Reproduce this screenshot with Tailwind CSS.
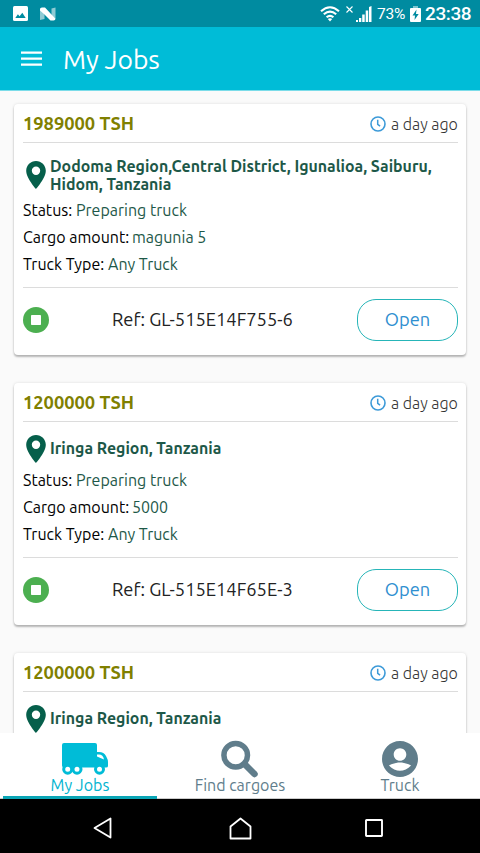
<!DOCTYPE html>
<html lang="en">
<head>
<meta charset="utf-8">
<title>My Jobs</title>
<script src="https://cdn.jsdelivr.net/npm/@tailwindcss/browser@4"></script>
</head>
<body class="h-[853px] w-[480px] overflow-hidden bg-[#fafafa] font-['Ubuntu','Noto_Sans',sans-serif] whitespace-nowrap">
<svg class="hidden">
  <symbol id="pin" viewBox="5 2 14 20"><path fill-rule="evenodd" d="M12 2C8.13 2 5 5.13 5 9c0 5.25 7 13 7 13s7-7.75 7-13c0-3.87-3.13-7-7-7zm0 10a3 3 0 1 1 0-6 3 3 0 0 1 0 6z"/></symbol>
  <symbol id="clock" viewBox="0 0 16 16"><circle cx="8" cy="8" r="7" fill="none" stroke="currentColor" stroke-width="1.6"/><path d="M7.700 3.700v4.600l2.400 1.900" fill="none" stroke="currentColor" stroke-width="1.500"/></symbol>
  <symbol id="stop" viewBox="0 0 26 26"><circle cx="13" cy="13" r="13" fill="#4caf50"/><rect x="8" y="8" width="10" height="10" rx=".8" fill="#fff"/></symbol>
</svg>
<div class="flex h-full flex-col">
  <div class="flex h-[27px] shrink-0 items-center bg-[#008ba0] pl-[13px] pr-[9px] text-white">
    <svg class="h-[15px] w-[15px]" viewBox="0 0 15 15"><rect width="15" height="15" rx="1.5" fill="#fff"/><path d="M2.300 12l2.600-3.800 1.700 2L9.300 6.800 12.700 12z" fill="#008ba0"/></svg>
    <svg class="ml-[11px] h-[14px] w-[18px]" viewBox="0 0 18 14"><path d="M1 2.500L5.500 5v7L1 13zM12.500 1.500l4-1v11l-4-3z" fill="#8fcbd4"/><path d="M1 2Q1 .5 3 .5h3l6 6.500 4.500 4.500q0 2-2 2h-3L5.500 7.500 1 3.500z" fill="#fff"/></svg>
    <div class="ml-auto flex items-center">
      <svg class="h-[16px] w-[20px]" viewBox="0 0 20 16" fill="none" stroke="#fff" stroke-width="2.100"><path d="M1 5.200Q10-2.700 19 5.200M3.800 8.300Q10 2.800 16.200 8.300M6.600 11.300Q10 8.300 13.400 11.300"/><path d="M7.800 13L10 15.500 12.200 13Q10 11.500 7.800 13z" fill="#fff" stroke="none"/></svg>
      <svg class="mb-[8px] ml-[6px] h-[7px] w-[7px]" viewBox="0 0 7 7" stroke="#fff" stroke-width="1.100"><path d="M.5.500l6 6M6.500.500l-6 6"/></svg>
      <svg class="ml-[3px] h-[16px] w-[16px]" viewBox="0 0 16 16" fill="#fff"><path d="M0 14h2v2H0zM3 12h2.300v4H3zM6.200 8.500h2.500V16H6.200zM9.700 4.500h2.500V16H9.700zM13 1l2.500-1v16H13z"/></svg>
      <span class="ml-[5px] mt-[2px] w-[29px] font-[Roboto] text-[15.500px] tracking-[-0.2px]">73%</span>
      <svg class="ml-[4px] h-[16px] w-[11px]" viewBox="0 0 11 16"><path d="M3 0h5v2H3z" fill="#7fc5cf"/><rect y="2" width="11" height="14" rx="1" fill="#fff"/><path d="M6.500 3.500L2.500 9.500H5L4.500 14 8.700 8H6z" fill="#008ba0"/></svg>
      <span class="ml-[4px] mt-[2px] w-[46px] font-[Roboto] text-[19px] font-medium tracking-[-0.4px]">23:38</span>
    </div>
  </div>
  <header class="flex h-[64px] shrink-0 items-center border-b border-[#7bdce9] bg-[#00bcd7] pl-[21px] text-white">
    <svg class="h-[15px] w-[21px]" viewBox="0 0 21 15" fill="#fff"><path d="M0 .5h21v2.200H0zM0 6.500h21v2.200H0zM0 12.500h21v2.200H0z"/></svg>
    <h1 class="ml-[21px] mt-[1px] text-[26.500px] leading-[32px] tracking-[-0.1px]">My Jobs</h1>
  </header>
  <main class="flex min-h-0 flex-1 flex-col gap-[28px] overflow-hidden px-[14px] pt-[13px] text-[16px] text-[#1d5848]">
    <article class="flex h-[251px] shrink-0 flex-col rounded-[4px] bg-white pl-[9px] pr-[8px] shadow-[0_2px_2px_rgba(0,0,0,0.25),0_0_3px_rgba(0,0,0,0.12)]">
      <div class="flex h-[39px] shrink-0 items-center border-b border-[#dcdcdc] pt-[1px]">
        <b class="text-[18.300px] text-[#808000]">1989000 TSH</b>
        <svg class="ml-auto h-4 w-4 text-[#3c9ad8]"><use href="#clock"/></svg>
        <span class="ml-[5px] w-[67px] font-light text-[#333]">a day ago</span>
      </div>
      <div class="flex h-[54px] shrink-0 items-center pt-[10px] pl-[3px]">
        <svg class="h-[28px] w-[20px] fill-[#065f4b]"><use href="#pin"/></svg>
        <b class="ml-[4px] text-[15.900px] leading-[18px]">Dodoma Region,Central District, Igunalioa, Saiburu,<br>Hidom, Tanzania</b>
      </div>
      <p class="h-[27px] leading-[27px]"><span class="inline-block w-[53px] text-black">Status:</span><span>Preparing truck</span></p>
      <p class="h-[27px] leading-[27px]"><span class="inline-block w-[109px] text-black">Cargo amount:</span><span>magunia 5</span></p>
      <p class="h-[27px] leading-[27px]"><span class="inline-block w-[85px] text-black">Truck Type:</span><span>Any Truck</span></p>
      <div class="mt-[9px] flex flex-1 items-center border-t border-[#dcdcdc] pb-[4px]">
        <svg class="h-[26px] w-[26px]"><use href="#stop"/></svg>
        <span class="ml-[63px] text-[18.300px] text-[#222]">Ref: GL-515E14F755-6</span>
        <button class="ml-auto h-[42px] w-[101px] rounded-[19px] border border-[#26b5b8] text-[18.300px] text-[#2f8fd0]">Open</button>
      </div>
    </article>
    <article class="flex h-[242px] shrink-0 flex-col rounded-[4px] bg-white pl-[9px] pr-[8px] shadow-[0_2px_2px_rgba(0,0,0,0.25),0_0_3px_rgba(0,0,0,0.12)]">
      <div class="flex h-[39px] shrink-0 items-center border-b border-[#dcdcdc] pt-[1px]">
        <b class="text-[18.300px] text-[#808000]">1200000 TSH</b>
        <svg class="ml-auto h-4 w-4 text-[#3c9ad8]"><use href="#clock"/></svg>
        <span class="ml-[5px] w-[67px] font-light text-[#333]">a day ago</span>
      </div>
      <div class="flex h-[45px] shrink-0 items-center pt-[9px] pl-[3px]">
        <svg class="h-[28px] w-[20px] fill-[#065f4b]"><use href="#pin"/></svg>
        <b class="mb-[2px] ml-[4px] text-[15.900px] leading-[18px]">Iringa Region, Tanzania</b>
      </div>
      <p class="h-[27px] leading-[27px]"><span class="inline-block w-[53px] text-black">Status:</span><span>Preparing truck</span></p>
      <p class="h-[27px] leading-[27px]"><span class="inline-block w-[109px] text-black">Cargo amount:</span><span>5000</span></p>
      <p class="h-[27px] leading-[27px]"><span class="inline-block w-[85px] text-black">Truck Type:</span><span>Any Truck</span></p>
      <div class="mt-[9px] flex flex-1 items-center border-t border-[#dcdcdc] pb-[4px]">
        <svg class="h-[26px] w-[26px]"><use href="#stop"/></svg>
        <span class="ml-[63px] text-[18.300px] text-[#222]">Ref: GL-515E14F65E-3</span>
        <button class="ml-auto h-[42px] w-[101px] rounded-[19px] border border-[#26b5b8] text-[18.300px] text-[#2f8fd0]">Open</button>
      </div>
    </article>
    <article class="flex h-[242px] shrink-0 flex-col rounded-[4px] bg-white pl-[9px] pr-[8px] shadow-[0_2px_2px_rgba(0,0,0,0.25),0_0_3px_rgba(0,0,0,0.12)]">
      <div class="flex h-[39px] shrink-0 items-center border-b border-[#dcdcdc] pt-[1px]">
        <b class="text-[18.300px] text-[#808000]">1200000 TSH</b>
        <svg class="ml-auto h-4 w-4 text-[#3c9ad8]"><use href="#clock"/></svg>
        <span class="ml-[5px] w-[67px] font-light text-[#333]">a day ago</span>
      </div>
      <div class="flex h-[45px] shrink-0 items-center pt-[9px] pl-[3px]">
        <svg class="h-[28px] w-[20px] fill-[#065f4b]"><use href="#pin"/></svg>
        <b class="mb-[2px] ml-[4px] text-[15.900px] leading-[18px]">Iringa Region, Tanzania</b>
      </div>
    </article>
  </main>
  <nav class="grid h-[66px] shrink-0 grid-cols-3 border-b border-[#ccc] bg-white text-[16px] leading-[20px] text-[#607d8b]">
    <div class="relative flex flex-col items-center pt-[10px] text-[#00b4d0]">
      <svg class="ml-[9px] h-[32px] w-[46px]" viewBox="0 0 46 32"><path fill="#00bcd7" fill-rule="evenodd" d="M2 0h31q2 0 2 2v7h2q5 0 7 4l1.400 3q.6 1 .6 3v4q0 1.500-2 1.500H2q-2 0-2-2V2q0-2 2-2zM35 11.500v2l7 3q-1-5-5-5z"/><g fill="#fff" stroke="#00bcd7" stroke-width="3"><circle cx="5.700" cy="26.200" r="4"/><circle cx="15" cy="26.200" r="4"/><circle cx="37.500" cy="26.200" r="4"/></g></svg>
      <span>My Jobs</span>
      <div class="absolute bottom-[-1px] left-[3px] h-[3px] w-[154px] bg-[#0aa5b5]"></div>
    </div>
    <div class="flex flex-col items-center pt-[7px]">
      <svg class="h-[38px] w-[38px]" viewBox="0 0 38 38" fill="none" stroke="#607d8b"><circle cx="14.700" cy="15.200" r="11.800" stroke-width="5.500"/><path d="M24 24.500l9.500 9.500" stroke-width="6.500" stroke-linecap="round"/></svg>
      <span class="mt-[-3px]">Find cargoes</span>
    </div>
    <div class="flex flex-col items-center pt-[8px]">
      <svg class="h-[36px] w-[36px]" viewBox="2 2 20 20" fill="#607d8b"><path d="M12 2C6.480 2 2 6.480 2 12s4.480 10 10 10 10-4.480 10-10S17.520 2 12 2zm0 4c1.930 0 3.500 1.570 3.500 3.500S13.930 13 12 13s-3.500-1.570-3.500-3.500S10.070 6 12 6zm0 12.500c-2.030 0-4.430-.82-6.140-2.880C7.550 14.800 9.680 14 12 14s4.450.8 6.140 1.620C16.430 17.680 14.030 18.500 12 18.500z"/></svg>
      <span class="mt-[-2px]">Truck</span>
    </div>
  </nav>
  <div class="flex h-[54px] shrink-0 items-center bg-black pt-[4px] pl-[93px]">
    <svg class="h-[22px] w-[19px]" viewBox="0 0 19 22" fill="none" stroke="#fff" stroke-width="1.800" stroke-linejoin="round"><path d="M17.500 1.500v19L1.500 11z"/></svg>
    <svg class="ml-[117px] h-[23px] w-[23px]" viewBox="0 0 23 23" fill="none" stroke="#fff" stroke-width="1.800" stroke-linejoin="round"><path d="M1.500 21.500V9.500l10-8 10 8v12z"/></svg>
    <svg class="ml-[113px] h-[18px] w-[18px]" viewBox="0 0 18 18" fill="none" stroke="#fff" stroke-width="1.900"><rect x="1" y="1" width="16" height="16" rx=".5"/></svg>
  </div>
</div>
</body>
</html>
